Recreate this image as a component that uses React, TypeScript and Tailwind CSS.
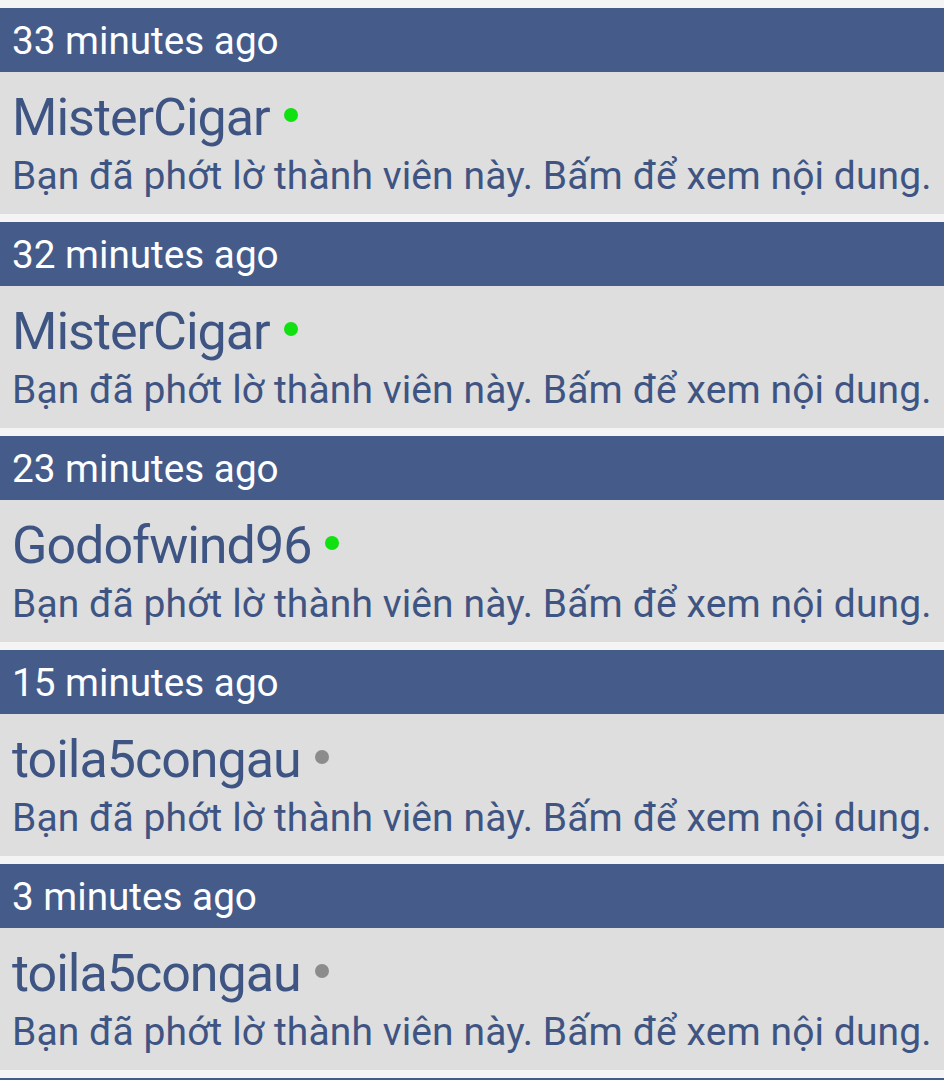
import React from "react";

const items = [
  { time: "33 minutes ago", user: "MisterCigar", online: true },
  { time: "32 minutes ago", user: "MisterCigar", online: true },
  { time: "23 minutes ago", user: "Godofwind96", online: true },
  { time: "15 minutes ago", user: "toila5congau", online: false },
  { time: "3 minutes ago", user: "toila5congau", online: false },
];

export default function App() {
  return (
    <div
      className="w-[944px] h-[1080px] overflow-hidden bg-[#f4f4f4] flex flex-col gap-[8px] pt-[8px]"
      style={{ fontFamily: "Roboto, 'Noto Sans', sans-serif" }}
    >
      {items.map((it, i) => (
        <div key={i} className="flex flex-col shrink-0">
          <div className="h-[64px] bg-[#455b8a] flex items-center pt-[2px] px-[12px] text-white text-[38.7px] leading-none">
            {it.time}
          </div>
          <div className="h-[142px] bg-[#dedede] px-[12px] pt-[16px] text-[#3e5482]">
            <div className="flex items-center h-[60px] text-[52px] leading-[60px] tracking-[-1px]">
              <span>{it.user}</span>
              <span
                className={
                  it.online
                    ? "ml-[14px] mb-[6px] w-[14px] h-[14px] rounded-full bg-[#11e011]"
                    : "ml-[14px] mb-[6px] w-[14px] h-[14px] rounded-full bg-[#8c8c8c]"
                }
              />
            </div>
            <div className="mt-[6px] text-[39px] leading-[44px] tracking-[0.1px] whitespace-nowrap">
              Bạn đã phớt lờ thành viên này. Bấm để xem nội dung.
            </div>
          </div>
        </div>
      ))}
      <div className="h-[64px] bg-[#455b8a] shrink-0" />
    </div>
  );
}
